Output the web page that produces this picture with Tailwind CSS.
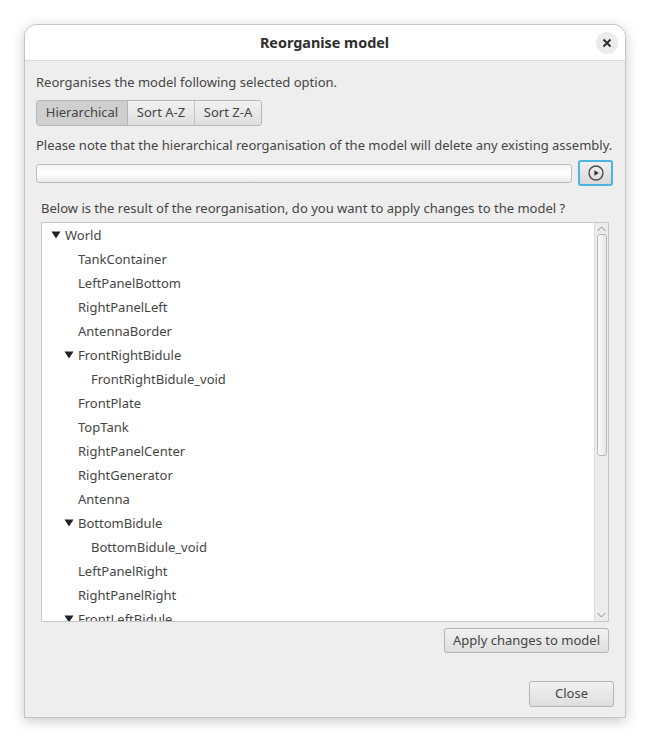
<!DOCTYPE html>
<html lang="en">
<head>
  <meta charset="UTF-8">
  <title>Reorganise model</title>
  <script src="https://cdn.jsdelivr.net/npm/@tailwindcss/browser@4"></script>
</head>
<body class="w-[650px] h-[742px] bg-white overflow-hidden font-['Noto_Sans',sans-serif] text-[13.03px] text-[#454545]">
  <div class="pt-[25px] pl-[25px]">
    <!-- window -->
    <div class="w-[600px] h-[692px] flex flex-col bg-[#eeeeee] rounded-t-[12px] overflow-hidden outline outline-[#c4c4c4] shadow-[0_3px_14px_rgba(0,0,0,0.25)]">
      <!-- title bar -->
      <div class="h-[36px] shrink-0 bg-white border-b border-[#dcdcdc] flex items-center justify-center relative">
        <span class="font-bold text-[14.4px] text-[#2e2e2e] mr-[1px]">Reorganise model</span>
        <div class="absolute right-[7px] top-[7px] w-[22px] h-[22px] rounded-full bg-[#ebebeb] flex items-center justify-center">
          <svg width="10" height="10" viewBox="0 0 10 10"><path d="M1.5 1.5 8.5 8.5M8.5 1.5 1.5 8.5" stroke="#2e2e2e" stroke-width="2"/></svg>
        </div>
      </div>

      <div class="flex-1 flex flex-col pl-[11px] pr-[11px]">
        <p class="h-[18px] mt-[12px] leading-[18px]">Reorganises the model following selected option.</p>

        <div class="mt-[9px] flex h-[26px] w-[226px] border border-[#b5b5b5] rounded-[3px] overflow-hidden">
          <div class="w-[91px] bg-[#cfcfcf] border-r border-[#b5b5b5] flex items-center justify-center">Hierarchical</div>
          <div class="w-[67px] bg-gradient-to-b from-[#f2f2f2] to-[#dedede] border-r border-[#c4c4c4] flex items-center justify-center">Sort A-Z</div>
          <div class="flex-1 bg-gradient-to-b from-[#f2f2f2] to-[#dedede] flex items-center justify-center">Sort Z-A</div>
        </div>

        <p class="h-[18px] mt-[10px] leading-[18px] whitespace-nowrap">Please note that the hierarchical reorganisation of the model will delete any existing assembly.</p>

        <div class="mt-[6px] flex items-center gap-[6px] h-[26px]">
          <div class="w-[536px] h-[19px] rounded-[3px] border border-[#bcbcbc] bg-gradient-to-b from-[#f4f4f4] via-white to-[#e9e9e9]"></div>
          <div class="w-[35px] h-[26px] rounded-[3px] border-2 border-[#4cb4df] bg-gradient-to-b from-[#f0f0f0] to-[#d8d8d8] flex items-center justify-center">
            <svg width="16" height="16" viewBox="0 0 16 16"><circle cx="8" cy="8" r="7" fill="none" stroke="#4a4a4a" stroke-width="1.4"/><path d="M6.4 5.2 10.8 8 6.4 10.8Z" fill="#333333"/></svg>
          </div>
        </div>

        <p class="h-[18px] mt-[13px] ml-[5px] leading-[18px]">Below is the result of the reorganisation, do you want to apply changes to the model ?</p>

        <!-- tree -->
        <div class="mt-[5px] ml-[5px] w-[568px] h-[400px] shrink-0 border border-[#c6c6c6] bg-white flex overflow-hidden">
          <div class="flex-1 overflow-hidden leading-[24px]">
            <div class="h-[24px] pl-[9px] flex items-center gap-[4px]">
              <svg width="10" height="8" viewBox="0 0 10 8"><path d="M0.5 0.5H9.5L5 7.5Z" fill="#222222"/></svg><span>World</span>
            </div>
            <div class="h-[24px] pl-[36px]">TankContainer</div>
            <div class="h-[24px] pl-[36px]">LeftPanelBottom</div>
            <div class="h-[24px] pl-[36px]">RightPanelLeft</div>
            <div class="h-[24px] pl-[36px]">AntennaBorder</div>
            <div class="h-[24px] pl-[22px] flex items-center gap-[4px]">
              <svg width="10" height="8" viewBox="0 0 10 8"><path d="M0.5 0.5H9.5L5 7.5Z" fill="#222222"/></svg><span>FrontRightBidule</span>
            </div>
            <div class="h-[24px] pl-[49px]">FrontRightBidule_void</div>
            <div class="h-[24px] pl-[36px]">FrontPlate</div>
            <div class="h-[24px] pl-[36px]">TopTank</div>
            <div class="h-[24px] pl-[36px]">RightPanelCenter</div>
            <div class="h-[24px] pl-[36px]">RightGenerator</div>
            <div class="h-[24px] pl-[36px]">Antenna</div>
            <div class="h-[24px] pl-[22px] flex items-center gap-[4px]">
              <svg width="10" height="8" viewBox="0 0 10 8"><path d="M0.5 0.5H9.5L5 7.5Z" fill="#222222"/></svg><span>BottomBidule</span>
            </div>
            <div class="h-[24px] pl-[49px]">BottomBidule_void</div>
            <div class="h-[24px] pl-[36px]">LeftPanelRight</div>
            <div class="h-[24px] pl-[36px]">RightPanelRight</div>
            <div class="h-[24px] pl-[22px] flex items-center gap-[4px]">
              <svg width="10" height="8" viewBox="0 0 10 8"><path d="M0.5 0.5H9.5L5 7.5Z" fill="#222222"/></svg><span>FrontLeftBidule</span>
            </div>
          </div>
          <!-- scrollbar -->
          <div class="w-[14px] shrink-0 bg-[#ececec] border-l border-[#dddddd] flex flex-col items-center">
            <svg class="mt-[3px]" width="9" height="6" viewBox="0 0 9 6"><path d="M0.5 5 4.5 1 8.5 5" fill="none" stroke="#8c8c8c"/></svg>
            <div class="mt-[2px] w-[10px] h-[222px] rounded-[3px] border border-[#b8b8b8] bg-gradient-to-r from-[#fafafa] to-[#e6e6e6]"></div>
            <div class="flex-1"></div>
            <svg class="mb-[3px]" width="9" height="6" viewBox="0 0 9 6"><path d="M0.5 1 4.5 5 8.5 1" fill="none" stroke="#8c8c8c"/></svg>
          </div>
        </div>

        <div class="mt-[6px] mr-[5px] flex justify-end">
          <div class="w-[165px] h-[25px] rounded-[3px] border border-[#b5b5b5] bg-gradient-to-b from-[#f2f2f2] to-[#dedede] flex items-center justify-center">Apply changes to model</div>
        </div>

        <div class="mt-[28px] flex justify-end">
          <div class="w-[85px] h-[26px] rounded-[3px] border border-[#b5b5b5] bg-gradient-to-b from-[#f2f2f2] to-[#dedede] flex items-center justify-center">Close</div>
        </div>
      </div>
    </div>
  </div>
</body>
</html>
